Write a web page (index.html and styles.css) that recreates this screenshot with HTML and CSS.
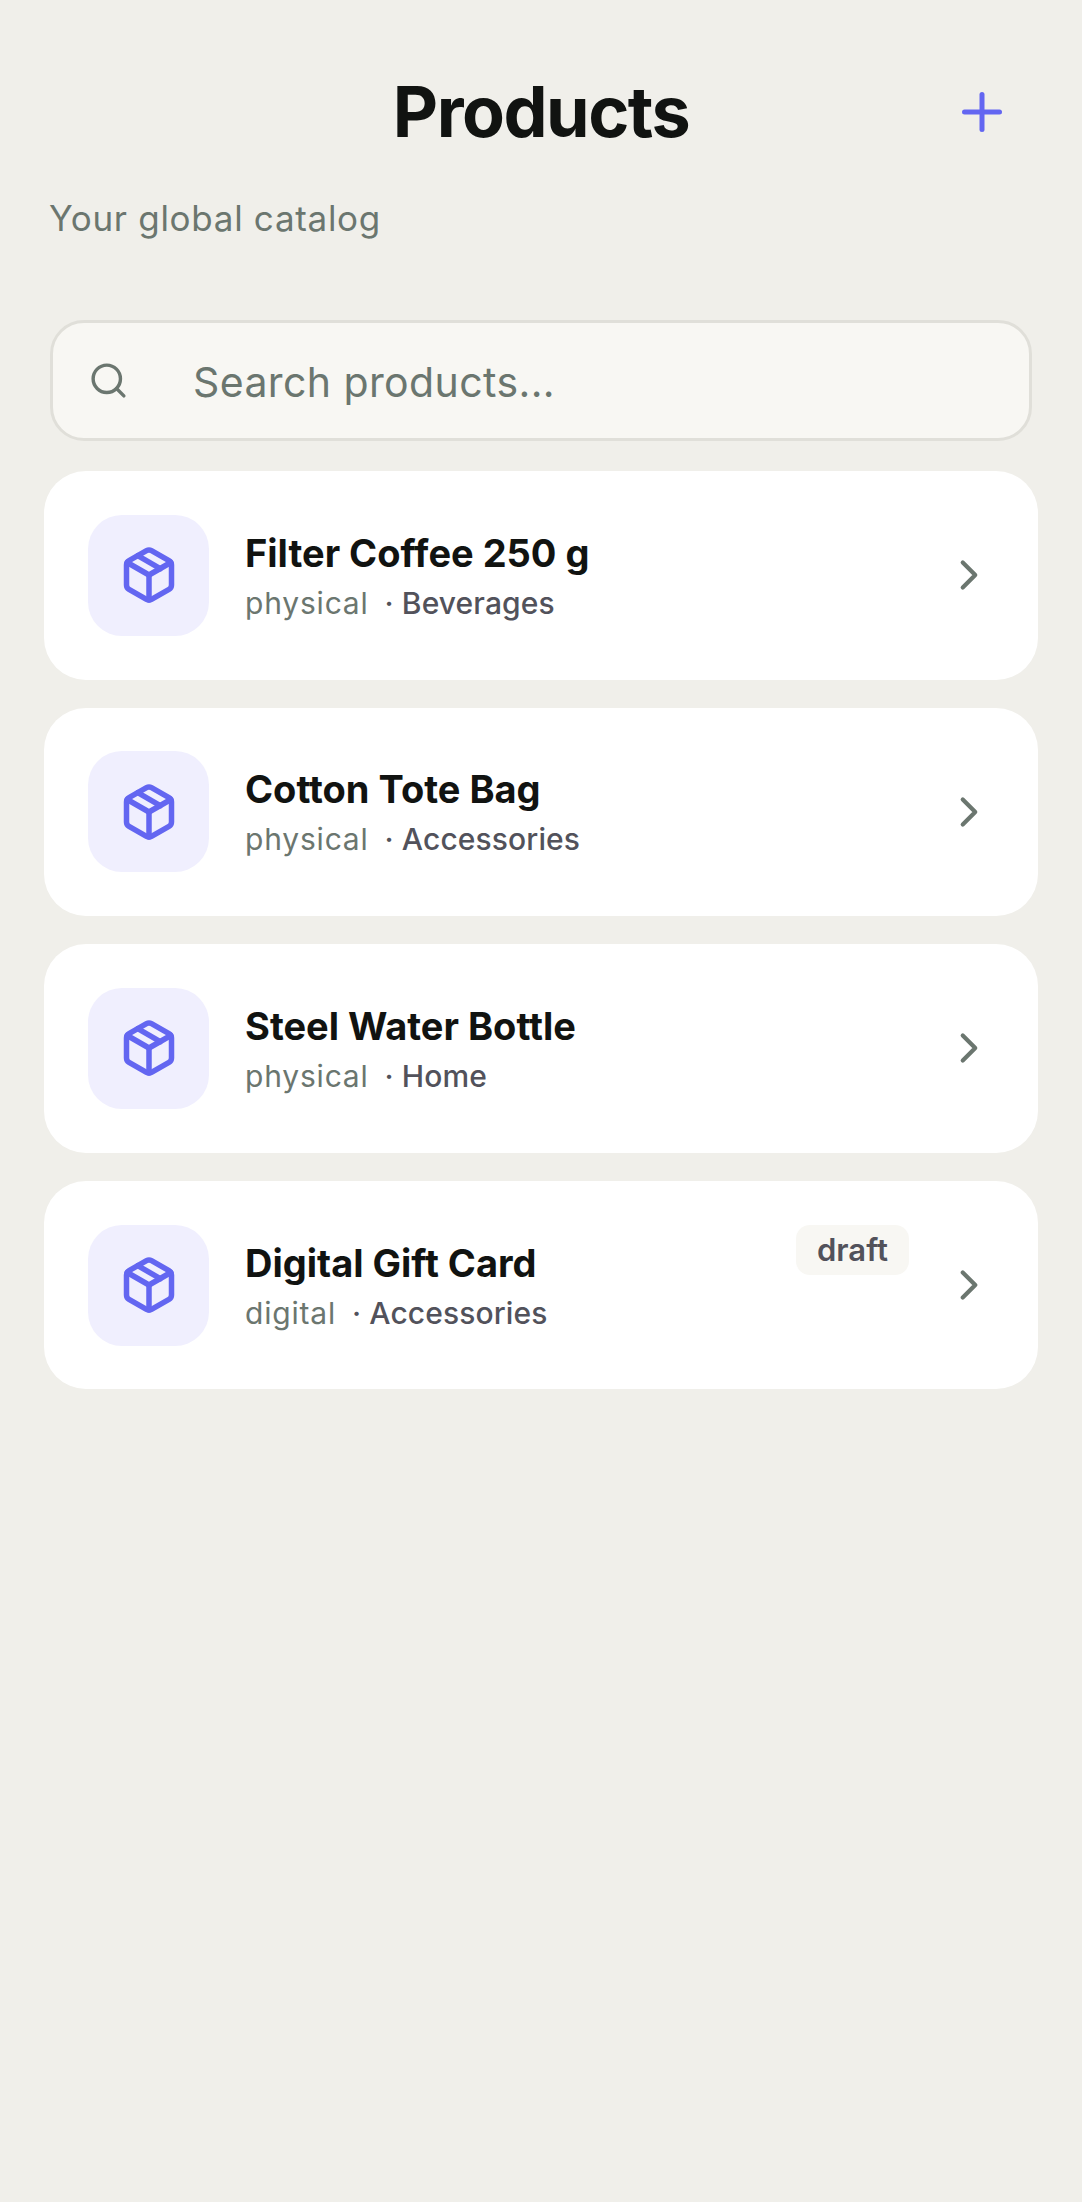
FILE: index.html
```html
<!DOCTYPE html>
<html lang="en">
<head>
  <meta charset="UTF-8" />
  <meta name="viewport" content="width=device-width, initial-scale=1.0"/>
  <title>Products</title>
  <link rel="stylesheet" href="styles.css">
</head>
<body>

  <!-- Header -->
  <header class="top-bar">
    <span class="top-spacer"></span>
    <h1>Products</h1>
    <button class="add-btn" aria-label="Add product">
      <svg class="icon-plus" viewBox="0 0 24 24"><path d="M5 12h14"/><path d="M12 5v14"/></svg>
    </button>
  </header>
  <p class="subtitle">Your global catalog</p>

  <!-- Search -->
  <div class="search">
    <svg class="icon-search" viewBox="0 0 24 24"><circle cx="11" cy="11" r="8"/><path d="m21 21-4.3-4.3"/></svg>
    <input type="text" placeholder="Search products...">
  </div>

  <!-- Product list -->
  <main class="product-list">
    <a class="card">
      <span class="thumb">
        <svg class="icon-box" viewBox="0 0 24 24"><path d="M11 21.73a2 2 0 0 0 2 0l7-4A2 2 0 0 0 21 16V8a2 2 0 0 0-1-1.73l-7-4a2 2 0 0 0-2 0l-7 4A2 2 0 0 0 3 8v8a2 2 0 0 0 1 1.73z"/><path d="M12 22V12"/><polyline points="3.29 7 12 12 20.71 7"/><path d="m7.5 4.27 9 5.15"/></svg>
      </span>
      <div class="info">
        <div class="name">Filter Coffee 250 g</div>
        <div class="meta"><span class="kind">physical</span><span class="cat">· Beverages</span></div>
      </div>
      <svg class="icon-chevron" viewBox="0 0 24 24"><path d="m9 18 6-6-6-6"/></svg>
    </a>

    <a class="card">
      <span class="thumb">
        <svg class="icon-box" viewBox="0 0 24 24"><path d="M11 21.73a2 2 0 0 0 2 0l7-4A2 2 0 0 0 21 16V8a2 2 0 0 0-1-1.73l-7-4a2 2 0 0 0-2 0l-7 4A2 2 0 0 0 3 8v8a2 2 0 0 0 1 1.73z"/><path d="M12 22V12"/><polyline points="3.29 7 12 12 20.71 7"/><path d="m7.5 4.27 9 5.15"/></svg>
      </span>
      <div class="info">
        <div class="name">Cotton Tote Bag</div>
        <div class="meta"><span class="kind">physical</span><span class="cat">· Accessories</span></div>
      </div>
      <svg class="icon-chevron" viewBox="0 0 24 24"><path d="m9 18 6-6-6-6"/></svg>
    </a>

    <a class="card">
      <span class="thumb">
        <svg class="icon-box" viewBox="0 0 24 24"><path d="M11 21.73a2 2 0 0 0 2 0l7-4A2 2 0 0 0 21 16V8a2 2 0 0 0-1-1.73l-7-4a2 2 0 0 0-2 0l-7 4A2 2 0 0 0 3 8v8a2 2 0 0 0 1 1.73z"/><path d="M12 22V12"/><polyline points="3.29 7 12 12 20.71 7"/><path d="m7.5 4.27 9 5.15"/></svg>
      </span>
      <div class="info">
        <div class="name">Steel Water Bottle</div>
        <div class="meta"><span class="kind">physical</span><span class="cat">· Home</span></div>
      </div>
      <svg class="icon-chevron" viewBox="0 0 24 24"><path d="m9 18 6-6-6-6"/></svg>
    </a>

    <a class="card">
      <span class="thumb">
        <svg class="icon-box" viewBox="0 0 24 24"><path d="M11 21.73a2 2 0 0 0 2 0l7-4A2 2 0 0 0 21 16V8a2 2 0 0 0-1-1.73l-7-4a2 2 0 0 0-2 0l-7 4A2 2 0 0 0 3 8v8a2 2 0 0 0 1 1.73z"/><path d="M12 22V12"/><polyline points="3.29 7 12 12 20.71 7"/><path d="m7.5 4.27 9 5.15"/></svg>
      </span>
      <div class="info">
        <div class="name">Digital Gift Card</div>
        <div class="meta"><span class="kind">digital</span><span class="cat">· Accessories</span></div>
      </div>
      <span class="badge">draft</span>
      <svg class="icon-chevron" viewBox="0 0 24 24"><path d="m9 18 6-6-6-6"/></svg>
    </a>
  </main>

</body>
</html>
```

FILE: styles.css
```css
body {
  margin: 0;
  min-height: 2202px;
  background-color: #f0efea;
  font-family: Inter, "Noto Sans", sans-serif;
  color: #111311;
}

svg {
  fill: none;
  stroke: currentColor;
  stroke-linecap: round;
  stroke-linejoin: round;
  stroke-width: 2;
  flex-shrink: 0;
}

/* Header */
.top-bar {
  display: grid;
  grid-template-columns: 1fr auto 1fr;
  align-items: center;
  padding: 62px 50px 0;
}

h1 {
  margin: 0;
  font-size: 70px;
  font-weight: 700;
  line-height: 100px;
  letter-spacing: -1.5px;
}

.add-btn {
  justify-self: end;
  display: flex;
  align-items: center;
  justify-content: center;
  width: 100px;
  height: 100px;
  padding: 0;
  border: none;
  background: none;
  color: #6366f1;
}

.icon-plus {
  width: 60px;
  height: 60px;
}

.subtitle {
  margin: 31px 49px 0;
  font-size: 35px;
  line-height: 50px;
  letter-spacing: 0.7px;
  color: #6b766f;
}

/* Search */
.search {
  display: flex;
  align-items: center;
  gap: 27px;
  box-sizing: border-box;
  height: 121px;
  margin: 77px 50px 30px;
  padding: 0 35px;
  background-color: #f8f7f3;
  border: 3px solid #e0dfd9;
  border-radius: 34px;
  color: #6b766f;
}

.icon-search {
  width: 41px;
  height: 41px;
}

.search input {
  flex: 1;
  min-width: 0;
  padding: 2px 0 0 37px;
  border: none;
  outline: none;
  background: none;
  font: inherit;
  font-size: 41px;
  letter-spacing: 0.4px;
  color: #6b766f;
}

.search input::placeholder {
  color: #6b766f;
  opacity: 1;
}

/* Cards */
.product-list {
  display: flex;
  flex-direction: column;
  gap: 28px;
  padding: 0 44px;
}

.card {
  display: flex;
  align-items: center;
  height: 208.6px;
  box-sizing: border-box;
  padding: 0 44px;
  background-color: #fff;
  border-radius: 42px;
}

.thumb {
  display: flex;
  align-items: center;
  justify-content: center;
  width: 121px;
  height: 121px;
  border-radius: 34px;
  background-color: #f0effe;
  color: #6366f1;
  flex-shrink: 0;
}

.icon-box {
  width: 60px;
  height: 60px;
  stroke-width: 2.2;
}

.info {
  flex: 1;
  min-width: 0;
  margin-left: 36px;
}

.name {
  font-size: 38px;
  font-weight: 700;
  line-height: 50px;
}

.meta {
  display: flex;
  gap: 16px;
  margin-top: 5px;
  font-size: 30px;
  line-height: 40px;
  letter-spacing: 0.8px;
}

.kind {
  color: #6b766f;
}

.cat {
  color: #52525b;
  font-weight: 500;
  letter-spacing: 0.1px;
}

.badge {
  align-self: flex-start;
  margin-top: 44px;
  margin-right: 35px;
  padding: 0 21px;
  height: 50px;
  line-height: 50px;
  border-radius: 14px;
  background-color: #f8f7f3;
  color: #52525b;
  font-size: 31px;
  font-weight: 600;
}

.icon-chevron {
  width: 50px;
  height: 50px;
  color: #6b766f;
}
```
